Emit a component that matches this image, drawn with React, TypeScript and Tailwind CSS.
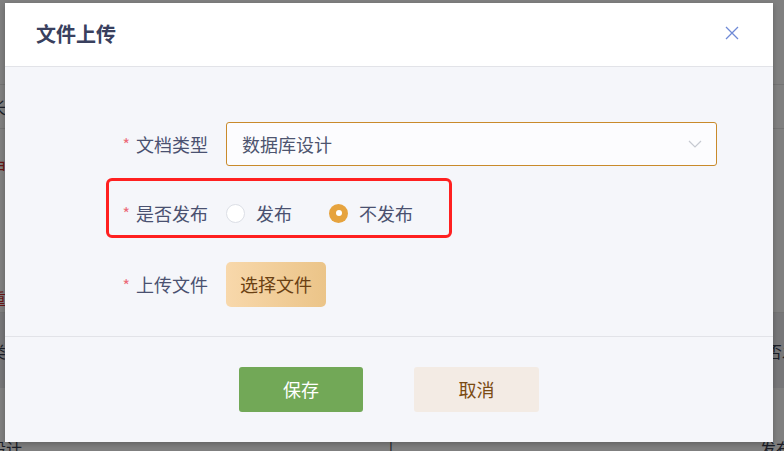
const CJK = "font-['Noto_Sans_CJK_SC','Noto_Sans',sans-serif]";

function Radio({ checked, label }: { checked?: boolean; label: string }) {
  return (
    <label className="flex items-center">
      {checked ? (
        <span className="w-[19px] h-[19px] rounded-full bg-[#e6a33e] flex items-center justify-center">
          <span className="w-[6px] h-[6px] rounded-full bg-white" />
        </span>
      ) : (
        <span className="w-[19px] h-[19px] rounded-full bg-white border border-[#dcdfe6]" />
      )}
      <span className="ml-[11px] text-[18px] text-[#4a5170]">{label}</span>
    </label>
  );
}

function Label({ text }: { text: string }) {
  return (
    <div className="w-[102px] flex items-center justify-end text-[18px] text-[#4a5170]">
      <span className="text-[#ec6b78] mr-[6px] text-[16px]">*</span>
      {text}
    </div>
  );
}

// page behind the mask (already dimmed), only its edges show
function BackgroundPage() {
  return (
    <div className="flex flex-col h-full text-[16px] text-[#1b1e28]">
      <div className="h-[85px] border-b border-[#747474]" />
      <div className="h-[44px] border-b border-[#747474] flex items-center">
        <span className="-ml-[10px]">长度</span>
      </div>
      <div className="h-[70px] flex items-start pt-[25px]">
        <span className="-ml-[10px] text-[#6a1515]">申请</span>
      </div>
      <div className="h-[113px] flex items-end pb-[2px]">
        <span className="-ml-[10px] text-[#6a1515]">重置</span>
      </div>
      <div className="h-[76px] bg-[#777779] border-t border-[#747474] flex items-center justify-between">
        <span className="-ml-[10px]">类型</span>
        <span className="-mr-[14px]">是否发</span>
      </div>
      <div className="flex-1 flex items-end justify-between">
        <span className="-ml-[10px] -mb-[9px]">设计</span>
        <span className="-mb-[9px]">|</span>
        <span className="-mr-[8px] -mb-[9px]">发布</span>
      </div>
    </div>
  );
}

export default function App() {
  return (
    <div className={`fixed inset-0 overflow-hidden bg-[#808080] ${CJK}`}>
      <BackgroundPage />
      <div className="absolute inset-0 pt-[3px] pl-[5px]">
        <div className="w-[768px] h-[439px] bg-[#f5f6fa] shadow-[0_2px_6px_rgba(0,0,0,0.25)] flex flex-col">
          <header className="h-[64px] bg-white border-b border-[#e2e3e8] flex items-center justify-between pl-[31px] pr-[34px]">
            <h1 className="text-[20px] font-bold text-[#39405e] -mt-[2px]">文件上传</h1>
            <button className="w-[14px] h-[14px] -mt-[4px]">
              <svg viewBox="0 0 14 14" className="w-[14px] h-[14px]" fill="none" stroke="#6f8ad6" strokeWidth="1.3">
                <path d="M1 1 L13 13 M13 1 L1 13" />
              </svg>
            </button>
          </header>
          <main className="h-[270px] border-b border-[#e2e3e8] flex flex-col pl-[101px] pr-[56px] pt-[55px]">
            <div className="flex h-[44px]">
              <Label text="文档类型" />
              <div className="ml-[18px] flex-1 flex items-center justify-between bg-[#fcfcfe] border border-[#c98a2b] rounded-[3px] pl-[15px] pr-[14px]">
                <span className="text-[18px] text-[#4e556f]">数据库设计</span>
                <svg viewBox="0 0 14 8" className="w-[14px] h-[8px]" fill="none" stroke="#c6c9d1" strokeWidth="1.2">
                  <path d="M1 1 L7 7 L13 1" />
                </svg>
              </div>
            </div>
            <div className="relative flex h-[44px] mt-[25px]">
              <Label text="是否发布" />
              <div className="ml-[18px] flex items-center gap-[37px]">
                <Radio label="发布" />
                <Radio checked label="不发布" />
              </div>
              <div className="absolute left-0 -top-[13px] -bottom-[3px] w-[346px] border-[3px] border-[#ff2020] rounded-[6px] pointer-events-none" />
            </div>
            <div className="flex h-[45px] mt-[27px]">
              <Label text="上传文件" />
              <button className="ml-[18px] w-[100px] h-[45px] rounded-[5px] bg-gradient-to-r from-[#f8d8ab] to-[#ebc488] text-[18px] text-[#6a4013]">
                选择文件
              </button>
            </div>
          </main>
          <footer className="flex-1 flex items-center justify-center gap-[51px] pb-[1px]">
            <button className="w-[124px] h-[45px] rounded-[3px] bg-[#72a857] text-white text-[18px]">保存</button>
            <button className="w-[125px] h-[45px] rounded-[3px] bg-[#f3ebe4] text-[#7a4a12] text-[18px]">取消</button>
          </footer>
        </div>
      </div>
    </div>
  );
}
